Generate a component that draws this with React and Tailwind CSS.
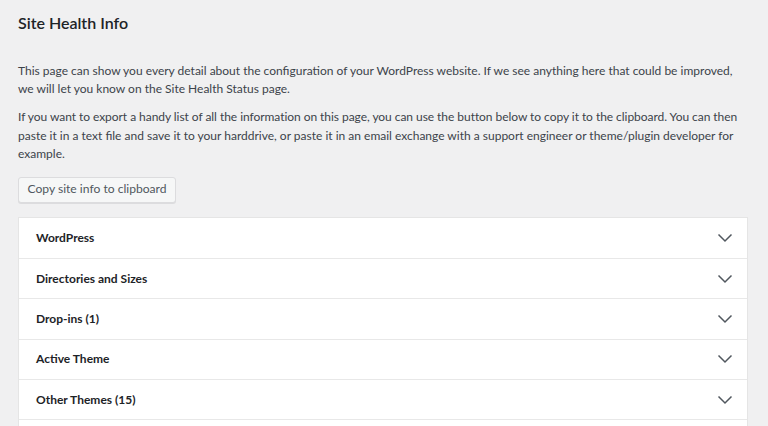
import React from "react";

const rows = ["WordPress", "Directories and Sizes", "Drop-ins (1)", "Active Theme", "Other Themes (15)"];

function Chevron() {
  return (
    <svg width="16" height="10" viewBox="0 0 16 10" fill="none">
      <path d="M1.5 1.5 L8 8 L14.5 1.5" stroke="#50575e" strokeWidth="1.5" />
    </svg>
  );
}

export default function App() {
  return (
    <div className="h-[426px] w-[768px] overflow-hidden bg-[#f0f0f1] px-[18px] pt-[12px] text-[#3c434a]" style={{ fontFamily: 'Lato, "Open Sans", sans-serif' }}>
      <h1 className="text-[16px] font-semibold leading-[22px] text-[#1d2327]">Site Health Info</h1>
      <p className="mt-[28px] w-[750px] whitespace-nowrap text-[12px] leading-[18px]">
        This page can show you every detail about the configuration of your WordPress website. If we see anything here that could be improved,
        <br />
        we will let you know on the Site Health Status page.
      </p>
      <p className="mt-[10px] w-[750px] whitespace-nowrap text-[12px] leading-[18.5px]">
        <span className="tracking-[-0.05px]">If you want to export a handy list of all the information on this page, you can use the button below to copy it to the clipboard. You can then</span>
        <br />
        paste it in a text file and save it to your harddrive, or paste it in an email exchange with a support engineer or theme/plugin developer for
        <br />
        example.
      </p>
      <button className="mt-[13px] h-[26px] w-[158px] rounded-[3px] border border-[#dcdcde] bg-[#f6f7f7] text-[12.1px] text-[#50575e] shadow-[0_1px_0_#dcdcde]">
        Copy site info to clipboard
      </button>
      <div className="mt-[14px] w-[730px] border border-[#e5e5e5] bg-white">
        {rows.map((r, i) => (
          <div key={r} className={`flex h-[40.4px] items-center justify-between pl-[17px] pr-[14px] ${i > 0 ? "border-t border-[#e8e8e8]" : ""}`}>
            <span className="text-[12px] font-bold text-[#1d2327]">{r}</span>
            <Chevron />
          </div>
        ))}
        <div className="h-[40px] border-t border-[#e8e8e8]" />
      </div>
    </div>
  );
}
